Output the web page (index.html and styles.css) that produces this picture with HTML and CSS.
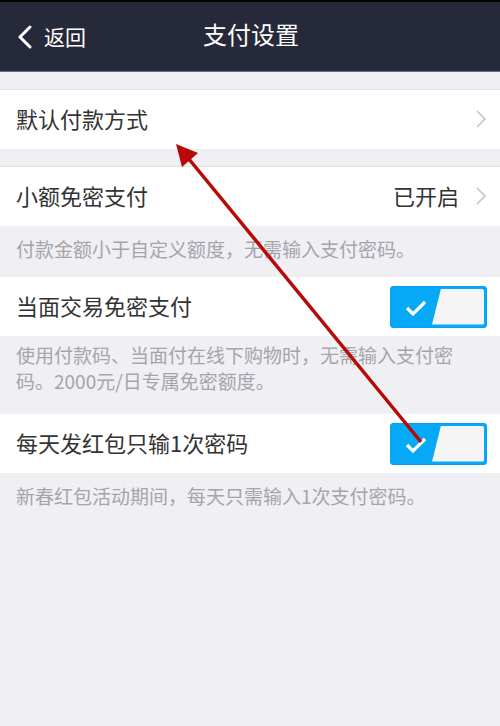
FILE: index.html
```html
<!DOCTYPE html>
<html lang="zh">
<head>
<meta charset="utf-8">
<link rel="stylesheet" href="styles.css">
</head>
<body>
<div class="screen">
  <header class="topbar">
    <div class="back">
      <svg class="back-icon" width="16" height="24" viewBox="0 0 16 24"><path d="M13 2 L3 12 L13 22" fill="none" stroke="#fff" stroke-width="3" stroke-linecap="round" stroke-linejoin="round"/></svg>
      <span>返回</span>
    </div>
    <div class="title">支付设置</div>
  </header>

  <div class="gap"></div>
  <div class="row">
    <span class="label">默认付款方式</span>
    <svg class="chev" width="12" height="20" viewBox="0 0 12 20"><path d="M2 2 L10 10 L2 18" fill="none" stroke="#c4c4c8" stroke-width="1.6"/></svg>
  </div>

  <div class="gap"></div>
  <div class="row">
    <span class="label">小额免密支付</span>
    <span class="value">已开启</span>
    <svg class="chev" width="12" height="20" viewBox="0 0 12 20"><path d="M2 2 L10 10 L2 18" fill="none" stroke="#c4c4c8" stroke-width="1.6"/></svg>
  </div>
  <p class="desc one">付款金额小于自定义额度，无需输入支付密码。</p>

  <div class="row">
    <span class="label">当面交易免密支付</span>
    <div class="toggle">
      <svg class="check" width="24" height="18" viewBox="0 0 24 18"><path d="M3 9 L9 15 L21 3" fill="none" stroke="#fff" stroke-width="3.2"/></svg>
      <div class="knob"></div>
    </div>
  </div>
  <p class="desc two">使用付款码、当面付在线下购物时，无需输入支付密码。2000元/日专属免密额度。</p>

  <div class="row">
    <span class="label">每天发红包只输1次密码</span>
    <div class="toggle">
      <svg class="check" width="24" height="18" viewBox="0 0 24 18"><path d="M3 9 L9 15 L21 3" fill="none" stroke="#fff" stroke-width="3.2"/></svg>
      <div class="knob"></div>
    </div>
  </div>
  <p class="desc one">新春红包活动期间，每天只需输入1次支付密码。</p>

  <svg class="arrow" width="500" height="726" viewBox="0 0 500 726">
    <line x1="421" y1="442" x2="184" y2="153" stroke="#b80808" stroke-width="3.5"/>
    <polygon points="176,144 198,153 182,167" fill="#b80808"/>
  </svg>
</div>
</body>
</html>
```

FILE: styles.css
```css
html, body {
  margin: 0;
  padding: 0;
}
body {
  width: 500px;
  height: 726px;
  overflow: hidden;
  background: #efeff4;
  font-family: "Noto Sans CJK SC", "Noto Sans", sans-serif;
}
.screen {
  position: relative;
  width: 500px;
  height: 726px;
  background: #efeff4;
}
.topbar {
  height: 69px;
  background: #262939;
  border-top: 2px solid #050505;
  border-bottom: 1px solid #6b6d78;
  display: flex;
  align-items: center;
  position: relative;
  color: #fff;
}
.back {
  display: flex;
  align-items: center;
  gap: 11px;
  padding-left: 17px;
  font-size: 21px;
  line-height: 1;
  padding-top: 1px;
}
.back span {
  padding-bottom: 2px;
}
.back-icon {
  display: block;
}
.title {
  position: absolute;
  left: 0;
  right: 0;
  text-align: center;
  font-size: 24px;
  line-height: 1;
  top: 20px;
  padding-left: 2px;
}
.gap {
  height: 17px;
  border-bottom: 1px solid #e2e2e6;
}
.row {
  height: 59px;
  background: #fff;
  display: flex;
  align-items: center;
  padding: 0 13px 0 16px;
  color: #333;
}
.label {
  font-size: 22px;
  line-height: 1;
  flex: 1;
  padding-bottom: 4px;
}
.value {
  font-size: 22px;
  line-height: 1;
  color: #333;
  margin-right: 16px;
  padding-bottom: 4px;
}
.chev {
  display: block;
  margin-bottom: 2px;
}
.desc {
  margin: 0;
  color: #a5a5ab;
  font-size: 19px;
  padding: 0 30px 0 16px;
  line-height: 26px;
}
.desc.one {
  height: 51px;
  display: flex;
  align-items: center;
  padding-bottom: 6px;
  box-sizing: border-box;
}
.desc.two {
  padding-top: 6px;
  padding-bottom: 20px;
}
.toggle {
  position: relative;
  width: 95px;
  height: 40px;
  background: #06a9f6;
  border: 1px solid #06a2ee;
  border-radius: 3px;
}
.check {
  position: absolute;
  left: 13px;
  top: 12px;
}
.knob {
  position: absolute;
  right: 2px;
  top: 2px;
  bottom: 2px;
  width: 52px;
  background: #f5f5f6;
  clip-path: polygon(9px 0, 100% 0, 100% 100%, 0 100%);
  border-radius: 0 2px 2px 0;
}
.arrow {
  position: absolute;
  left: 0;
  top: 0;
  pointer-events: none;
}
```
